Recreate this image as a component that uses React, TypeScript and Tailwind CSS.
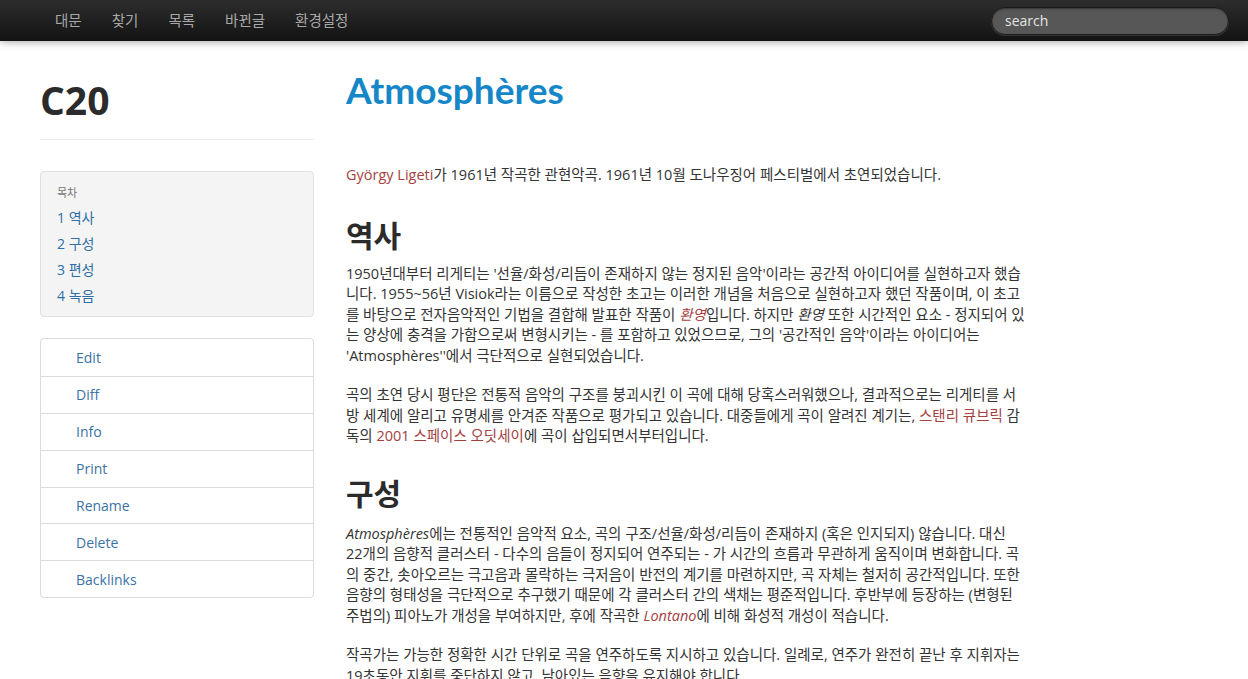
import React from "react";

const FONT = { fontFamily: '"Open Sans", "Noto Sans CJK KR", sans-serif' };
const TITLE_FONT = { fontFamily: 'Lato, "Noto Sans CJK KR", sans-serif' };

function RedLink({ children, italic }: { children: React.ReactNode; italic?: boolean }) {
  return <a className={`text-[#a3413f] ${italic ? "italic" : ""}`}>{children}</a>;
}

function Navbar() {
  const items = ["대문", "찾기", "목록", "바뀐글", "환경설정"];
  return (
    <div className="h-[41px] flex items-center justify-between bg-gradient-to-b from-[#2d2d2d] to-[#131313] shadow-[0_1px_8px_rgba(0,0,0,0.35)] relative z-10">
      <nav className="flex pl-[40px]">
        {items.map((t) => (
          <a key={t} className="px-[15px] text-[14.5px] leading-[41px] text-[#a8a8a8]">
            {t}
          </a>
        ))}
      </nav>
      <div className="mr-[19px] w-[238px] h-[28px] rounded-full bg-[#575757] border border-[#1b1b1b] shadow-[inset_0_1px_2px_rgba(0,0,0,0.4),0_1px_0_rgba(255,255,255,0.12)] flex items-center pl-[13px] pb-[1px] text-[14px] text-[#e4e4e4]">
        search
      </div>
    </div>
  );
}

function Sidebar() {
  const toc = ["1 역사", "2 구성", "3 편성", "4 녹음"];
  const actions = ["Edit", "Diff", "Info", "Print", "Rename", "Delete", "Backlinks"];
  return (
    <aside className="ml-[40px] w-[274px] shrink-0">
      <h1 className="mt-[39px] text-[39px] leading-[40px] font-bold text-[#2b2b2b]">C20</h1>
      <div className="mt-[19px] border-t border-[#eaeaea]" />
      <div className="mt-[31px] h-[146px] rounded-[4px] border border-[#e1e1e1] bg-[#f4f4f4] pl-[16px] pt-[11px]">
        <div className="text-[11px] leading-[20px] text-[#777] mb-[2px]">목차</div>
        {toc.map((t) => (
          <div key={t} className="text-[14px] leading-[26px] text-[#2f6ea5]">
            {t}
          </div>
        ))}
      </div>
      <div className="mt-[21px] rounded-[4px] border border-[#dcdcdc] bg-white">
        {actions.map((t, i) => (
          <div
            key={t}
            className={`h-[36.9px] flex items-center pl-[35px] text-[14px] text-[#3a72a6] ${
              i > 0 ? "border-t border-[#dcdcdc]" : ""
            }`}
          >
            {t}
          </div>
        ))}
      </div>
    </aside>
  );
}

function Main() {
  const p = "text-[14.5px] leading-[20.5px] text-[#333] whitespace-nowrap";
  return (
    <main className="ml-[32px] flex-1">
      <h1 className="mt-[29px] text-[37px] leading-[40px] font-bold text-[#1587c8]" style={TITLE_FONT}>
        Atmosphères
      </h1>
      <p className={`${p} mt-[55px]`}>
        <RedLink>György Ligeti</RedLink>가 1961년 작곡한 관현악곡. 1961년 10월 도나우징어 페스티벌에서 초연되었습니다.
      </p>
      <h2 className="mt-[30px] text-[30px] leading-[40px] font-bold text-[#2b2b2b]">역사</h2>
      <p className={`${p} mt-[8px]`}>
        1950년대부터 리게티는 '선율/화성/리듬이 존재하지 않는 정지된 음악'이라는 공간적 아이디어를 실현하고자 했습
        <br />
        니다. 1955~56년 Visiok라는 이름으로 작성한 초고는 이러한 개념을 처음으로 실현하고자 했던 작품이며, 이 초고
        <br />
        를 바탕으로 전자음악적인 기법을 결합해 발표한 작품이 <RedLink italic>환영</RedLink>입니다. 하지만 <em>환영</em> 또한 시간적인 요소 - 정지되어 있
        <br />
        는 양상에 충격을 가함으로써 변형시키는 - 를 포함하고 있었으므로, 그의 '공간적인 음악'이라는 아이디어는
        <br />
        'Atmosphères''에서 극단적으로 실현되었습니다.
      </p>
      <p className={`${p} mt-[19px]`}>
        곡의 초연 당시 평단은 전통적 음악의 구조를 붕괴시킨 이 곡에 대해 당혹스러워했으나, 결과적으로는 리게티를 서
        <br />
        방 세계에 알리고 유명세를 안겨준 작품으로 평가되고 있습니다. 대중들에게 곡이 알려진 계기는, <RedLink>스탠리 큐브릭</RedLink> 감
        <br />
        독의 <RedLink>2001 스페이스 오딧세이</RedLink>에 곡이 삽입되면서부터입니다.
      </p>
      <h2 className="mt-[27px] text-[30px] leading-[40px] font-bold text-[#2b2b2b]">구성</h2>
      <p className={`${p} mt-[10px]`}>
        <em>Atmosphères</em>에는 전통적인 음악적 요소, 곡의 구조/선율/화성/리듬이 존재하지 (혹은 인지되지) 않습니다. 대신
        <br />
        22개의 음향적 클러스터 - 다수의 음들이 정지되어 연주되는 - 가 시간의 흐름과 무관하게 움직이며 변화합니다. 곡
        <br />
        의 중간, 솟아오르는 극고음과 몰락하는 극저음이 반전의 계기를 마련하지만, 곡 자체는 철저히 공간적입니다. 또한
        <br />
        음향의 형태성을 극단적으로 추구했기 때문에 각 클러스터 간의 색채는 평준적입니다. 후반부에 등장하는 (변형된
        <br />
        주법의) 피아노가 개성을 부여하지만, 후에 작곡한 <RedLink italic>Lontano</RedLink>에 비해 화성적 개성이 적습니다.
      </p>
      <p className={`${p} mt-[19px]`}>
        작곡가는 가능한 정확한 시간 단위로 곡을 연주하도록 지시하고 있습니다. 일례로, 연주가 완전히 끝난 후 지휘자는
        <br />
        19초동안 지휘를 중단하지 않고, 남아있는 음향을 유지해야 합니다.
      </p>
    </main>
  );
}

export default function App() {
  return (
    <div className="w-[1248px] h-[679px] overflow-hidden bg-white" style={FONT}>
      <Navbar />
      <div className="flex">
        <Sidebar />
        <Main />
      </div>
    </div>
  );
}
